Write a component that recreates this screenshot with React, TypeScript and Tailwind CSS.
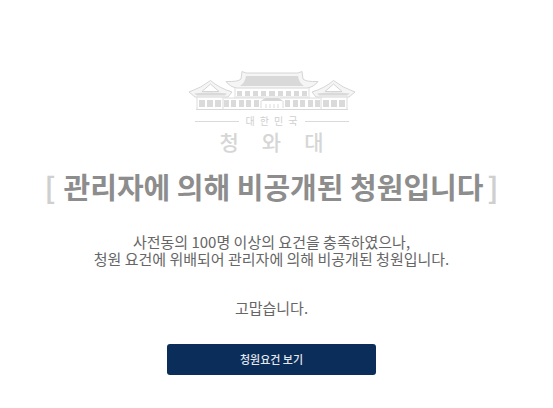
const wingWindows = [11, 19, 27];
const corridorWindows = [36, 43, 51, 58, 66];
const upperWindows = [49, 57, 65, 73];

function HallHalf() {
  return (
    <g>
      <path d="M84 3H58L54 1.500 53 9Q50 12 38 11.500 42 17 49 18H84" fill="#f5f5f5" stroke="#d6d6d6" />
      <path d="M84 6H58Q57 13 52 16H84Z" fill="#d9d9d9" />
      <path d="M47 18V26M84 27H46" fill="none" stroke="#dddddd" />
      {upperWindows.map((x) => (
        <rect key={x} x={x} y="21" width="5" height="5" fill="#dadada" />
      ))}
      <rect x="81" y="21" width="3" height="5" fill="#dadada" />
      <path d="M1 22Q13 18 22.500 10.500 31 18 44 22L40 27H7Z" fill="#f5f5f5" stroke="#d6d6d6" />
      <path d="M14 21.500L22.500 14 31 21.500Z" fill="#ffffff" stroke="#d4d4d4" />
      <path d="M6 23.500Q22 21.500 39 23.500L37 25.500H9Z" fill="#d9d9d9" />
      <path d="M9 27V39M35 27V39M36 28H76" fill="none" stroke="#dcdcdc" />
      {wingWindows.map((x) => (
        <rect key={x} x={x} y="30" width="6" height="7" fill="#dadada" />
      ))}
      {corridorWindows.map((x) => (
        <rect key={x} x={x} y="30" width="5" height="7" fill="#dadada" />
      ))}
      <path d="M73 31L77 28H84V31Z" fill="#d6d6d6" />
      <path d="M73 31V38M78 34V38M82 34V38" fill="none" stroke="#dadada" />
      <path d="M8 39.500H84" fill="none" stroke="#d8d8d8" strokeWidth="1.200" />
    </g>
  );
}

function Emblem() {
  return (
    <div className="flex w-[168px] flex-col items-center">
      <svg viewBox="0 0 168 42" className="h-[42px] w-full" aria-hidden="true">
        <HallHalf />
        <g transform="matrix(-1 0 0 1 168 0)">
          <HallHalf />
        </g>
      </svg>
      <div className="flex w-full items-center justify-between px-[7px] text-[10px] leading-[18px] text-[#cfcfcf]">
        <span className="h-px w-11 bg-[#dadada]" />
        <span className="flex gap-[5px]">
          <span>대</span>
          <span>한</span>
          <span>민</span>
          <span>국</span>
        </span>
        <span className="h-px w-11 bg-[#dadada]" />
      </div>
      <div className="flex gap-[23px] text-[21px] leading-[22px] font-medium text-[#d6d6d6]">
        <span>청</span>
        <span>와</span>
        <span>대</span>
      </div>
    </div>
  );
}

export default function App() {
  return (
    <main className="flex min-h-screen flex-col items-center bg-white pt-[70px] pr-[10px] font-['Noto_Sans_CJK_KR',sans-serif]">
      <Emblem />
      <h1 className="mt-[13px] flex text-[29px] leading-[42px] font-bold whitespace-nowrap text-[#8d8d8d]">
        <span className="text-[#cfcfcf]">[</span>
        <span className="pr-1 pl-2">관리자에 의해 비공개된 청원입니다</span>
        <span className="text-[#cfcfcf]">]</span>
      </h1>
      <p className="mt-[26px] text-center text-[15px] leading-[17px] text-[#666666]">
        사전동의 100명 이상의 요건을 충족하였으나,
        <br />
        청원 요건에 위배되어 관리자에 의해 비공개된 청원입니다.
      </p>
      <p className="mt-8 text-[15px] leading-[17px] text-[#666666]">고맙습니다.</p>
      <button
        type="button"
        className="mt-7 h-[31px] w-[209px] rounded-[3px] bg-[#0b2d59] text-[11px] font-medium text-[#e4e9ef]"
      >
        청원요건 보기
      </button>
    </main>
  );
}
